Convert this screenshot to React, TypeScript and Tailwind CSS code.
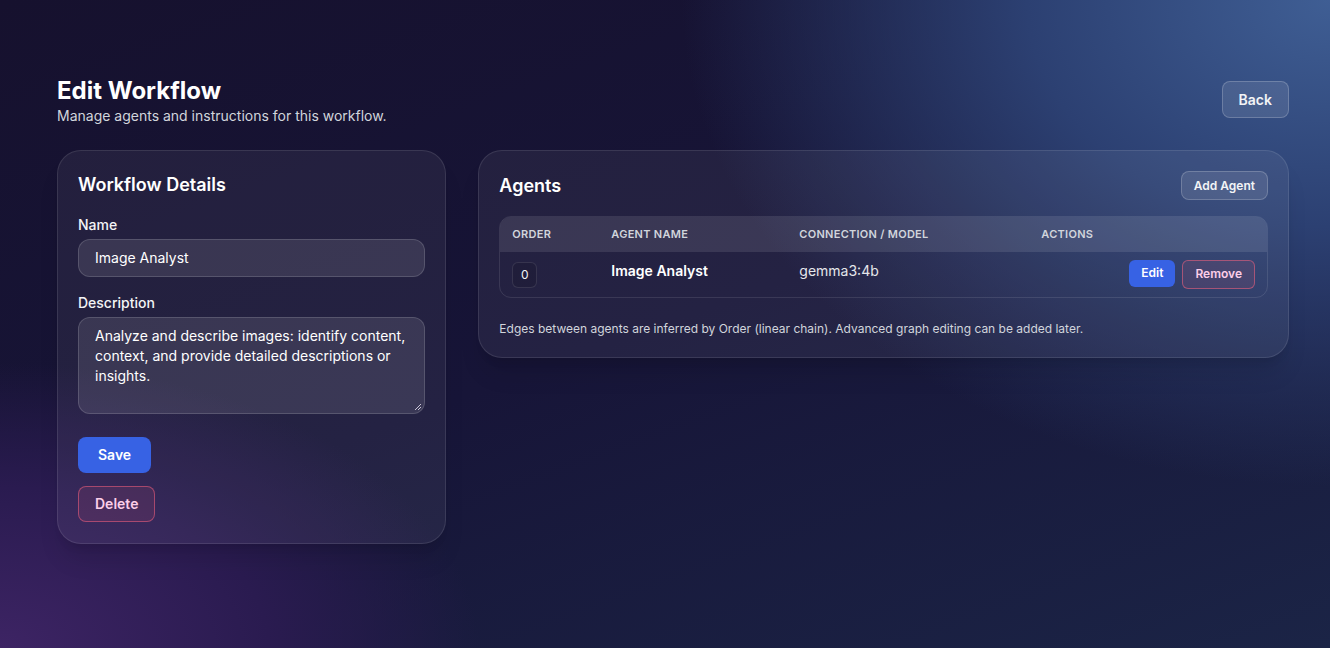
import React from "react";

export default function App() {
  return (
    <div
      className="min-h-[648px] w-full text-white bg-[radial-gradient(ellipse_65%_100%_at_100%_0%,#3f5e94_0%,#2c4072_35%,transparent_75%),radial-gradient(ellipse_45%_55%_at_0%_100%,#3d2464_0%,#2a1b50_45%,transparent_80%),linear-gradient(160deg,#16112e_0%,#171538_50%,#1b2446_100%)]"
      style={{ fontFamily: "Inter, 'Noto Sans', sans-serif" }}
    >
      <div className="pl-[57px] pr-[41px] pt-[77px] pb-10">
        <div className="flex items-start justify-between">
          <div>
            <h1 className="text-2xl font-bold leading-[28px]">Edit Workflow</h1>
            <p className="text-sm text-gray-300 leading-5 mt-[1px]">Manage agents and instructions for this workflow.</p>
          </div>
          <button className="mt-[4px] h-[37px] px-4 rounded-lg bg-white/10 border border-white/20 text-sm font-semibold text-gray-100">
            Back
          </button>
        </div>

        <div className="grid grid-cols-3 gap-8 mt-[24px] items-start">
          <div className="col-span-1 rounded-3xl border border-white/10 bg-white/[0.06] p-5 pb-[21px] shadow-xl">
            <h2 className="text-lg font-semibold leading-7">Workflow Details</h2>
            <div className="mt-4">
              <label className="block text-sm font-medium leading-5 text-gray-100 mb-1">Name</label>
              <div className="h-[38px] rounded-xl border border-white/15 bg-white/10 px-4 flex items-center text-sm text-white">
                Image Analyst
              </div>
            </div>
            <div className="mt-4">
              <label className="block text-sm font-medium leading-5 text-gray-100 mb-1">Description</label>
              <div className="relative h-[97px] rounded-xl border border-white/15 bg-white/10 px-4 py-2 text-sm leading-5 text-white">
                Analyze and describe images: identify content, context, and provide detailed descriptions or insights.
                <svg className="absolute right-[2px] bottom-[2px]" width="8" height="8" viewBox="0 0 8 8">
                  <path d="M7 1L1 7M7 4L4 7" stroke="#c9c4d6" strokeWidth="1" />
                </svg>
              </div>
            </div>
            <div className="mt-[23px] flex flex-col items-start gap-[13px]">
              <button className="h-9 px-5 rounded-lg bg-[#3762e4] text-sm font-semibold text-white">Save</button>
              <button className="h-9 px-4 rounded-lg border border-rose-400/50 bg-rose-400/10 text-sm font-semibold text-pink-200">
                Delete
              </button>
            </div>
          </div>

          <div className="col-span-2 rounded-3xl border border-white/10 bg-white/[0.06] p-5 shadow-xl">
            <div className="flex items-center justify-between">
              <h2 className="text-lg font-semibold leading-7">Agents</h2>
              <button className="h-[29px] px-3 rounded-lg bg-white/10 border border-white/20 text-xs font-semibold text-gray-100">
                Add Agent
              </button>
            </div>
            <div className="mt-4 rounded-xl border border-white/10 overflow-hidden">
              <table className="w-full table-fixed text-left border-collapse">
                <thead>
                  <tr className="bg-white/10 h-[34px]">
                    <th className="w-[99px] px-3 text-[11px] font-semibold uppercase tracking-wide text-gray-300">Order</th>
                    <th className="w-[188px] px-3 text-[11px] font-semibold uppercase tracking-wide text-gray-300">Agent Name</th>
                    <th className="w-[242px] px-3 text-[11px] font-semibold uppercase tracking-wide text-gray-300">Connection / Model</th>
                    <th className="px-3 text-[11px] font-semibold uppercase tracking-wide text-gray-300">Actions</th>
                  </tr>
                </thead>
                <tbody>
                  <tr className="h-[46px] border-t border-white/10">
                    <td className="px-3">
                      <span className="inline-flex h-[26px] w-[25px] items-center justify-center rounded-md border border-white/10 bg-black/10 text-xs text-gray-100">
                        0
                      </span>
                    </td>
                    <td className="px-3 pb-[6px] text-sm font-semibold text-white">Image Analyst</td>
                    <td className="px-3 pb-[6px] text-sm text-gray-200">gemma3:4b</td>
                    <td className="px-3">
                      <div className="flex justify-end gap-[7px]">
                        <button className="h-[27px] px-3 rounded-md bg-[#3762e4] text-xs font-semibold text-white">Edit</button>
                        <button className="h-[29px] px-3 rounded-md border border-rose-400/50 bg-rose-400/10 text-xs font-semibold text-pink-200">
                          Remove
                        </button>
                      </div>
                    </td>
                  </tr>
                </tbody>
              </table>
            </div>
            <p className="mt-[23px] text-xs leading-4 text-gray-300">
              Edges between agents are inferred by Order (linear chain). Advanced graph editing can be added later.
            </p>
          </div>
        </div>
      </div>
    </div>
  );
}
